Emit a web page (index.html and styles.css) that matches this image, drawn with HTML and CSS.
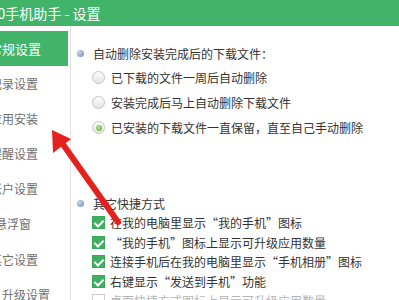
FILE: index.html
```html
<!DOCTYPE html>
<html lang="zh-CN">
<head>
    <meta charset="UTF-8">
    <meta name="viewport" content="width=device-width, initial-scale=1.0">
    <title>360手机助手 - 设置</title>
    <link rel="stylesheet" href="styles.css">
</head>
<body>
    <div class="window">
        <div class="title-bar">360手机助手 - 设置</div>

        <div class="main">
            <ul class="side-nav">
                <li class="nav-item active">常规设置</li>
                <li class="nav-item">记录设置</li>
                <li class="nav-item">应用安装</li>
                <li class="nav-item">提醒设置</li>
                <li class="nav-item">帐户设置</li>
                <li class="nav-item nav-short">悬浮窗</li>
                <li class="nav-item">其它设置</li>
                <li class="nav-item nav-wide">升级设置</li>
            </ul>

            <div class="content">
                <div class="section-title"><span class="dot"></span>自动删除安装完成后的下载文件：</div>
                <div class="opt-group">
                    <label class="opt-row">
                        <span class="radio"></span>已下载的文件一周后自动删除
                    </label>
                    <label class="opt-row">
                        <span class="radio"></span>安装完成后马上自动删除下载文件
                    </label>
                    <label class="opt-row">
                        <span class="radio checked"></span>已安装的下载文件一直保留，直至自己手动删除
                    </label>
                </div>

                <div class="section-title second"><span class="dot"></span>其它快捷方式</div>
                <label class="check-row">
                    <span class="check on"></span>在我的电脑里显示“我的手机”图标
                </label>
                <label class="check-row">
                    <span class="check on"></span>“我的手机”图标上显示可升级应用数量
                </label>
                <label class="check-row">
                    <span class="check on"></span>连接手机后在我的电脑里显示“手机相册”图标
                </label>
                <label class="check-row">
                    <span class="check on"></span>右键显示“发送到手机”功能
                </label>
                <label class="check-row off">
                    <span class="check"></span>桌面快捷方式图标上显示可升级应用数量
                </label>
            </div>
        </div>

        <!-- red pointer drawn over the screenshot -->
        <svg class="pointer" width="399" height="300" viewBox="0 0 399 300">
            <line x1="118" y1="222" x2="62" y2="143" stroke="#e5211d" stroke-width="6" stroke-linecap="round"/>
            <polygon points="52,130 53,153 71,139" fill="#e5211d"/>
        </svg>
    </div>
</body>
</html>
```

FILE: styles.css
```css
* {
    box-sizing: border-box;
}
body {
    margin: 0;
    font-family: "Noto Sans CJK SC", "Noto Sans", sans-serif;
    background: #fff;
}
.window {
    position: relative;
    width: 399px;
    height: 300px;
    overflow: hidden;
    background: #fff;
}
.title-bar {
    height: 26px;
    line-height: 26px;
    background: #42b46a;
    color: #fff;
    font-size: 14px;
    text-indent: -18px;
    white-space: nowrap;
}
.main {
    display: flex;
    height: 274px;
}
.side-nav {
    list-style: none;
    margin: 0;
    padding: 5px 0 0;
    width: 71px;
    border-right: 1px solid #e2e2e2;
    flex-shrink: 0;
    overflow: hidden;
}
.nav-item {
    height: 35.1px;
    line-height: 35px;
    margin-right: 2px;
    font-size: 12px;
    color: #6f6f6f;
    white-space: nowrap;
    text-indent: -10px;
}
.nav-item.active {
    background: #42b46a;
    color: #fff;
    font-size: 13px;
    text-indent: -11px;
}
.nav-short {
    text-indent: -5px;
}
.nav-wide {
    text-indent: 2px;
}
.content {
    flex: 1;
    padding: 17px 0 0 6px;
    font-size: 12px;
    color: #333;
    white-space: nowrap;
}
.section-title {
    display: flex;
    align-items: center;
    height: 20px;
}
.section-title.second {
    margin-top: 53px;
}
.dot {
    width: 7px;
    height: 7px;
    border-radius: 50%;
    background: radial-gradient(circle at 35% 35%, #c9d6ea, #6d87b4);
    margin-right: 9px;
}
.opt-group {
    margin-top: 2px;
}
.opt-row, .check-row {
    display: flex;
    align-items: center;
    padding-left: 15px;
}
.opt-row {
    height: 25px;
}
.check-row {
    height: 19.5px;
}
.radio {
    width: 13px;
    height: 13px;
    border-radius: 50%;
    border: 1px solid #c4c4c4;
    background: linear-gradient(#fdfdfd, #e4e4e4);
    margin-right: 6px;
    display: flex;
    align-items: center;
    justify-content: center;
}
.radio.checked::after {
    content: "";
    width: 6px;
    height: 6px;
    border-radius: 50%;
    background: radial-gradient(circle at 40% 40%, #b6e48c, #57a92c);
}
.check {
    position: relative;
    width: 13px;
    height: 13px;
    margin-right: 5px;
    border: 1px solid #d0d0d0;
    background: #fff;
}
.check.on {
    border-color: #3aa75a;
    background: #3fb062;
}
.check.on::after {
    content: "";
    position: absolute;
    left: 3px;
    top: 1px;
    width: 4px;
    height: 7px;
    border: solid #fff;
    border-width: 0 2px 2px 0;
    transform: rotate(45deg);
}
.check-row.off {
    color: #b5b5b5;
}
.pointer {
    position: absolute;
    left: 0;
    top: 0;
    pointer-events: none;
}
```
